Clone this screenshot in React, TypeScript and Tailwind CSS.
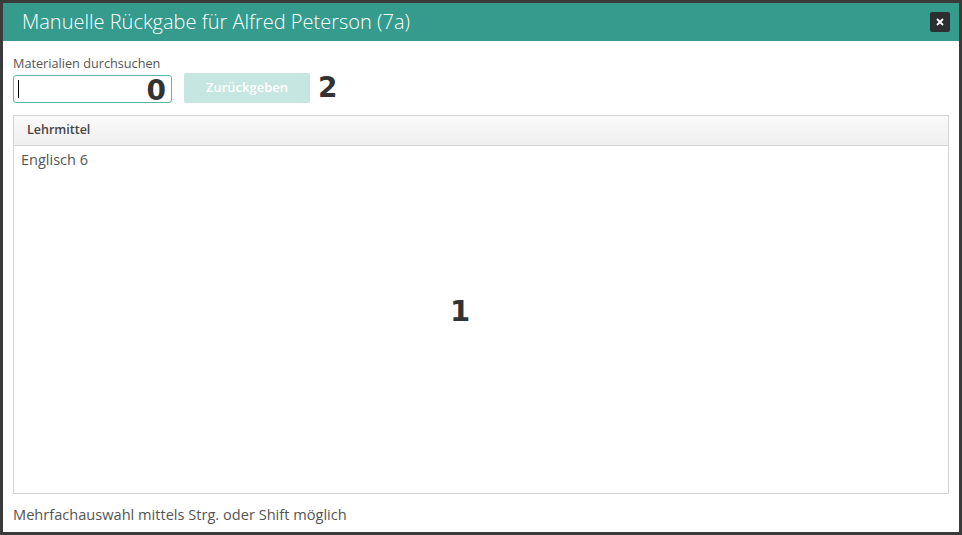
import React from "react";

export default function App() {
  return (
    <div className="w-[962px] h-[535px] bg-[#3a3a3a] p-[3px] overflow-hidden" style={{ fontFamily: '"Open Sans", sans-serif' }}>
      <div className="flex flex-col w-full h-full bg-white">
        <div className="h-[38px] bg-[#359b8d] flex items-center justify-between pl-[19px] pr-[9px]">
          <span className="text-[20px] font-light text-white leading-none">Manuelle Rückgabe für Alfred Peterson (7a)</span>
          <button className="w-[20px] h-[20px] rounded-[2px] bg-[#2b2f31] text-white flex items-center justify-center">
            <svg width="8" height="8" viewBox="0 0 8 8"><path d="M1 1L7 7M7 1L1 7" stroke="white" strokeWidth="1.8" /></svg>
          </button>
        </div>
        <div className="flex-1 flex flex-col px-[10px] pt-[14px]">
          <div className="text-[12.7px] text-[#555] leading-[16px]">Materialien durchsuchen</div>
          <div className="flex items-center mt-[2px] h-[30px]">
            <div className="relative w-[159px] h-[28px] mt-[2px] border border-[#5db5a8] rounded-[3px] flex items-center">
              <div className="ml-[4px] w-px h-[18px] bg-black" />
              <span className="absolute right-[5px] top-[-6px] text-[28px] font-bold text-[#333]" style={{ fontFamily: '"DejaVu Sans", Verdana, sans-serif' }}>0</span>
            </div>
            <button className="ml-[12px] w-[126px] h-[30px] bg-[#c5e6e1] rounded-[2px] text-white text-[13px] font-semibold">Zurückgeben</button>
            <span className="ml-[8px] text-[28px] font-bold text-[#333] leading-none" style={{ fontFamily: '"DejaVu Sans", Verdana, sans-serif' }}>2</span>
          </div>
          <div className="mt-[12px] h-[379px] border border-[#d5d5d5] flex flex-col">
            <div className="h-[30px] border-b border-[#d5d5d5] bg-gradient-to-b from-[#fafafa] to-[#efefef] flex items-center pl-[13px] text-[12.5px] font-semibold text-[#444]">Lehrmittel</div>
            <div className="relative flex-1">
              <div className="pl-[7px] pt-[3px] text-[14.5px] text-[#555]">Englisch 6</div>
              <span className="absolute left-[436px] top-[144px] text-[29px] font-bold text-[#333]" style={{ fontFamily: '"DejaVu Sans", Verdana, sans-serif' }}>1</span>
            </div>
          </div>
          <div className="mt-[10px] text-[14.6px] text-[#555]">Mehrfachauswahl mittels Strg. oder Shift möglich</div>
        </div>
      </div>
    </div>
  );
}
